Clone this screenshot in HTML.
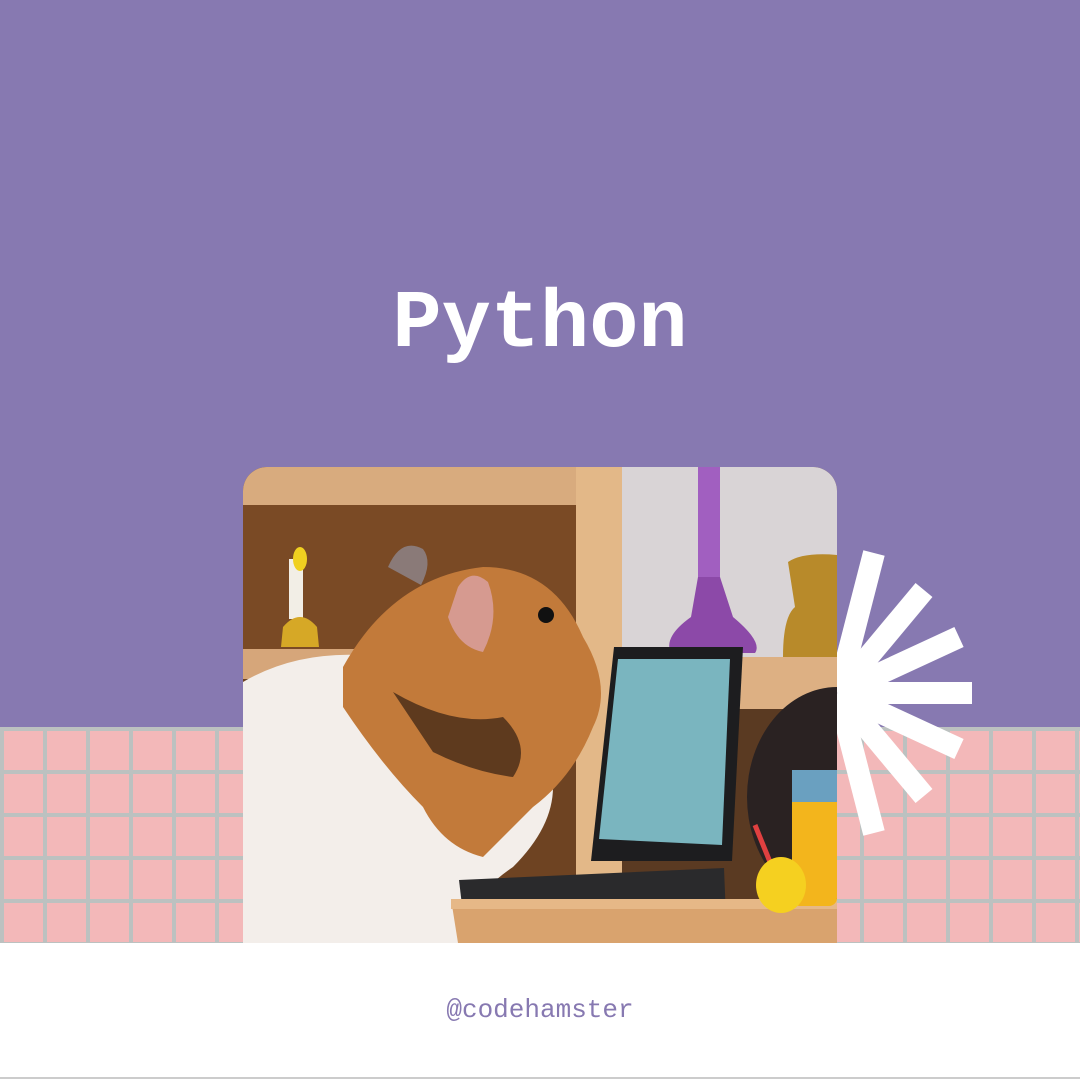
<!DOCTYPE html>
<html><head><meta charset="utf-8"><style>
html,body{margin:0;padding:0}
body{width:1080px;height:1080px;position:relative;overflow:hidden;background:#fff;font-family:"Liberation Mono",monospace}
#top{position:absolute;left:0;top:0;width:1080px;height:727px;background:#8779b1}
#grid{position:absolute;left:0;top:727px;width:1080px;height:216px;background:#bcc1c0;
background-image:linear-gradient(to right,#bcc1c0 0 4px,transparent 4px),linear-gradient(to bottom,#bcc1c0 0 4px,#f3b8b9 4px);
background-size:43px 43px,43px 43px;background-position:0 0,0 0}
#title{position:absolute;left:0;width:1080px;top:280px;text-align:center;color:#fff;font-size:82px;line-height:90px;font-weight:bold;font-family:"Liberation Mono",monospace}
#handle{position:absolute;left:0;width:1080px;top:994px;text-align:center;color:#8779b1;font-size:26px;line-height:32px}
#line{position:absolute;left:0;top:1077px;width:1080px;height:2px;background:#ccc}
#star{position:absolute;left:0;top:0}
#photo{position:absolute;left:243px;top:467px;width:594px;height:476px;border-radius:24px 24px 0 0;overflow:hidden}
</style></head><body>
<div id="top"></div>
<div id="grid"></div>
<div id="title">Python</div>
<svg id="star" width="1080" height="1080">
<g stroke="#fff" stroke-width="22" stroke-linecap="butt">
<line x1="838" y1="693" x2="972" y2="693"/>
<line x1="838" y1="693" x2="959" y2="637"/>
<line x1="838" y1="693" x2="959" y2="749"/>
<line x1="838" y1="693" x2="924" y2="590"/>
<line x1="838" y1="693" x2="924" y2="796"/>
<line x1="838" y1="693" x2="874" y2="553"/>
<line x1="838" y1="693" x2="874" y2="833"/>
</g></svg>
<div id="photo"><svg width="594" height="476" viewBox="0 0 594 476">
<rect width="594" height="476" fill="#6e4322"/>
<rect x="0" y="0" width="340" height="38" fill="#d8ab7e"/>
<rect x="0" y="38" width="333" height="144" fill="#7a4a25"/>
<rect x="0" y="182" width="340" height="30" fill="#d6a67a"/>
<rect x="379" y="0" width="215" height="190" fill="#d9d4d6"/>
<rect x="379" y="190" width="215" height="52" fill="#ddb083"/>
<rect x="379" y="242" width="215" height="234" fill="#5a3a22"/>
<ellipse cx="594" cy="330" rx="90" ry="110" fill="#2a2222"/>
<rect x="333" y="0" width="46" height="476" fill="#e3b888"/>
<rect x="455" y="0" width="22" height="120" fill="#a15fc0"/>
<path d="M455,110 L477,110 L490,150 Q520,175 512,186 L428,186 Q420,170 448,150Z" fill="#8c49a8"/>
<path d="M545,95 Q560,85 594,88 L594,190 L540,190 Q540,150 552,140Z" fill="#b88a2a"/>
<rect x="46" y="92" width="14" height="60" fill="#f2eee6"/>
<ellipse cx="57" cy="92" rx="7" ry="12" fill="#f0d020"/>
<path d="M40,160 Q57,140 74,160 L76,180 L38,180Z" fill="#d6a826"/>
<path d="M0,215 Q60,180 140,190 Q250,200 300,280 Q330,340 270,400 Q225,430 215,476 L0,476Z" fill="#f3eeea"/>
<path d="M100,200 Q150,110 240,100 Q310,100 340,170 Q370,220 350,260 Q330,310 290,340 Q260,370 240,390 Q200,380 180,340 Q140,300 100,240Z" fill="#c27a3a"/>
<path d="M150,225 Q210,260 260,250 Q290,280 270,310 Q230,305 190,285Z" fill="#5e3a1e"/>
<path d="M145,100 Q158,70 180,82 Q190,95 178,118Z" fill="#8a7a78"/>
<path d="M215,120 Q228,100 245,115 Q258,150 240,185 Q215,180 205,150Z" fill="#d69a90"/>
<circle cx="303" cy="148" r="8" fill="#111"/>
<path d="M371,180 L500,180 L489,394 L348,394Z" fill="#1d1d1f"/>
<path d="M375,192 L487,192 L479,378 L356,372Z" fill="#7ab5bf"/>
<path d="M216,413 L481,401 L483,451 L220,447Z" fill="#2a2a2c"/>
<path d="M208,432 L594,432 L594,476 L215,476Z" fill="#d9a36e"/>
<rect x="208" y="432" width="386" height="10" fill="#e6b887"/>
<rect x="549" y="303" width="45" height="136" rx="8" fill="#f3b51c"/>
<rect x="549" y="303" width="45" height="32" fill="#6aa0c0"/>
<line x1="512" y1="358" x2="527" y2="395" stroke="#e04040" stroke-width="5"/>
<ellipse cx="538" cy="418" rx="25" ry="28" fill="#f5d020"/>
</svg></div>
<div id="handle">@codehamster</div>
<div id="line"></div>
</body></html>
